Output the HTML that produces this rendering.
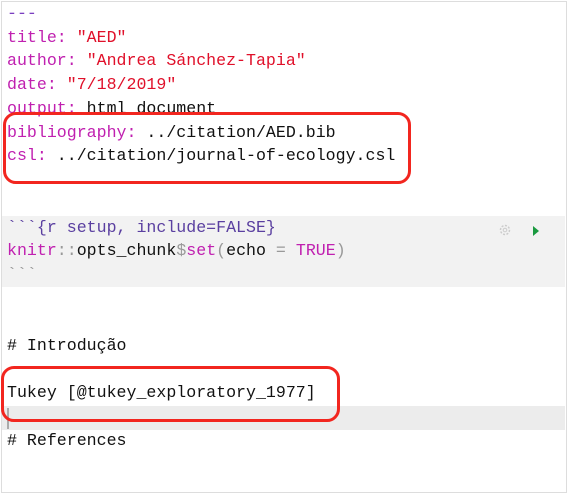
<!DOCTYPE html>
<html><head><style>
body{margin:0;width:567px;height:481px;background:#fff;position:relative;overflow:hidden;font-family:"Liberation Mono","DejaVu Sans Mono",monospace;font-size:16.6px}
.frame{position:absolute;left:1px;top:1px;width:564px;height:490px;border:1px solid #ddd}
.l{position:absolute;left:7px;height:23.72px;line-height:23.72px;white-space:pre;color:#111}
.m{color:#c020b0}.s{color:#e0102a}.p{color:#7b3fc0}.g{color:#999}
.red{position:absolute;border:3px solid #f2261f;border-radius:13px}
</style></head><body>
<div class="frame"></div>
<div style="position:absolute;left:2px;top:216px;width:563px;height:71px;background:#f2f2f2"></div>
<div style="position:absolute;left:2px;top:406px;width:563px;height:24px;background:#ececec"></div>
<div style="position:absolute;left:7px;top:408px;width:2px;height:21px;background:#aaa"></div>
<div class="l p" style="top:2px">---</div>
<div class="l" style="top:25.7px"><span class="m">title:</span> <span class="s">"AED"</span></div>
<div class="l" style="top:49.4px"><span class="m">author:</span> <span class="s">"Andrea Sánchez-Tapia"</span></div>
<div class="l" style="top:73.2px"><span class="m">date:</span> <span class="s">"7/18/2019"</span></div>
<div class="l" style="top:96.9px"><span class="m">output:</span> html_document</div>
<div class="l" style="top:120.6px"><span class="m">bibliography:</span> ../citation/AED.bib</div>
<div class="l" style="top:144.3px"><span class="m">csl:</span> ../citation/journal-of-ecology.csl</div>
<div class="l" style="top:215.5px;color:#5a3fa0">&#96;&#96;&#96;{r setup, include=FALSE}</div>
<div class="l" style="top:239.2px"><span class="m">knitr</span><span class="g">::</span>opts_chunk<span class="g">$</span><span class="m">set</span><span class="g">(</span>echo <span class="g">=</span> <span class="m">TRUE</span><span class="g">)</span></div>
<div class="l g" style="top:262.9px">&#96;&#96;&#96;</div>
<div class="l" style="top:334px"># Introdução</div>
<div class="l" style="top:381.4px">Tukey [@tukey_exploratory_1977]</div>
<div class="l" style="top:428.9px"># References</div>
<svg style="position:absolute;left:498px;top:223px" width="14" height="14" viewBox="0 0 14 14"><circle cx="7" cy="7" r="4.5" fill="none" stroke="#ccc" stroke-width="1.5" stroke-dasharray="2 1.5"/><circle cx="7" cy="7" r="1.8" fill="none" stroke="#ccc"/></svg>
<svg style="position:absolute;left:532px;top:225px" width="8" height="12"><path d="M1 1L7 6L1 11Z" fill="#1a9a40"/></svg>
<div class="red" style="left:3px;top:112px;width:402px;height:66px"></div>
<div class="red" style="left:1px;top:366px;width:333px;height:50px"></div>
</body></html>
